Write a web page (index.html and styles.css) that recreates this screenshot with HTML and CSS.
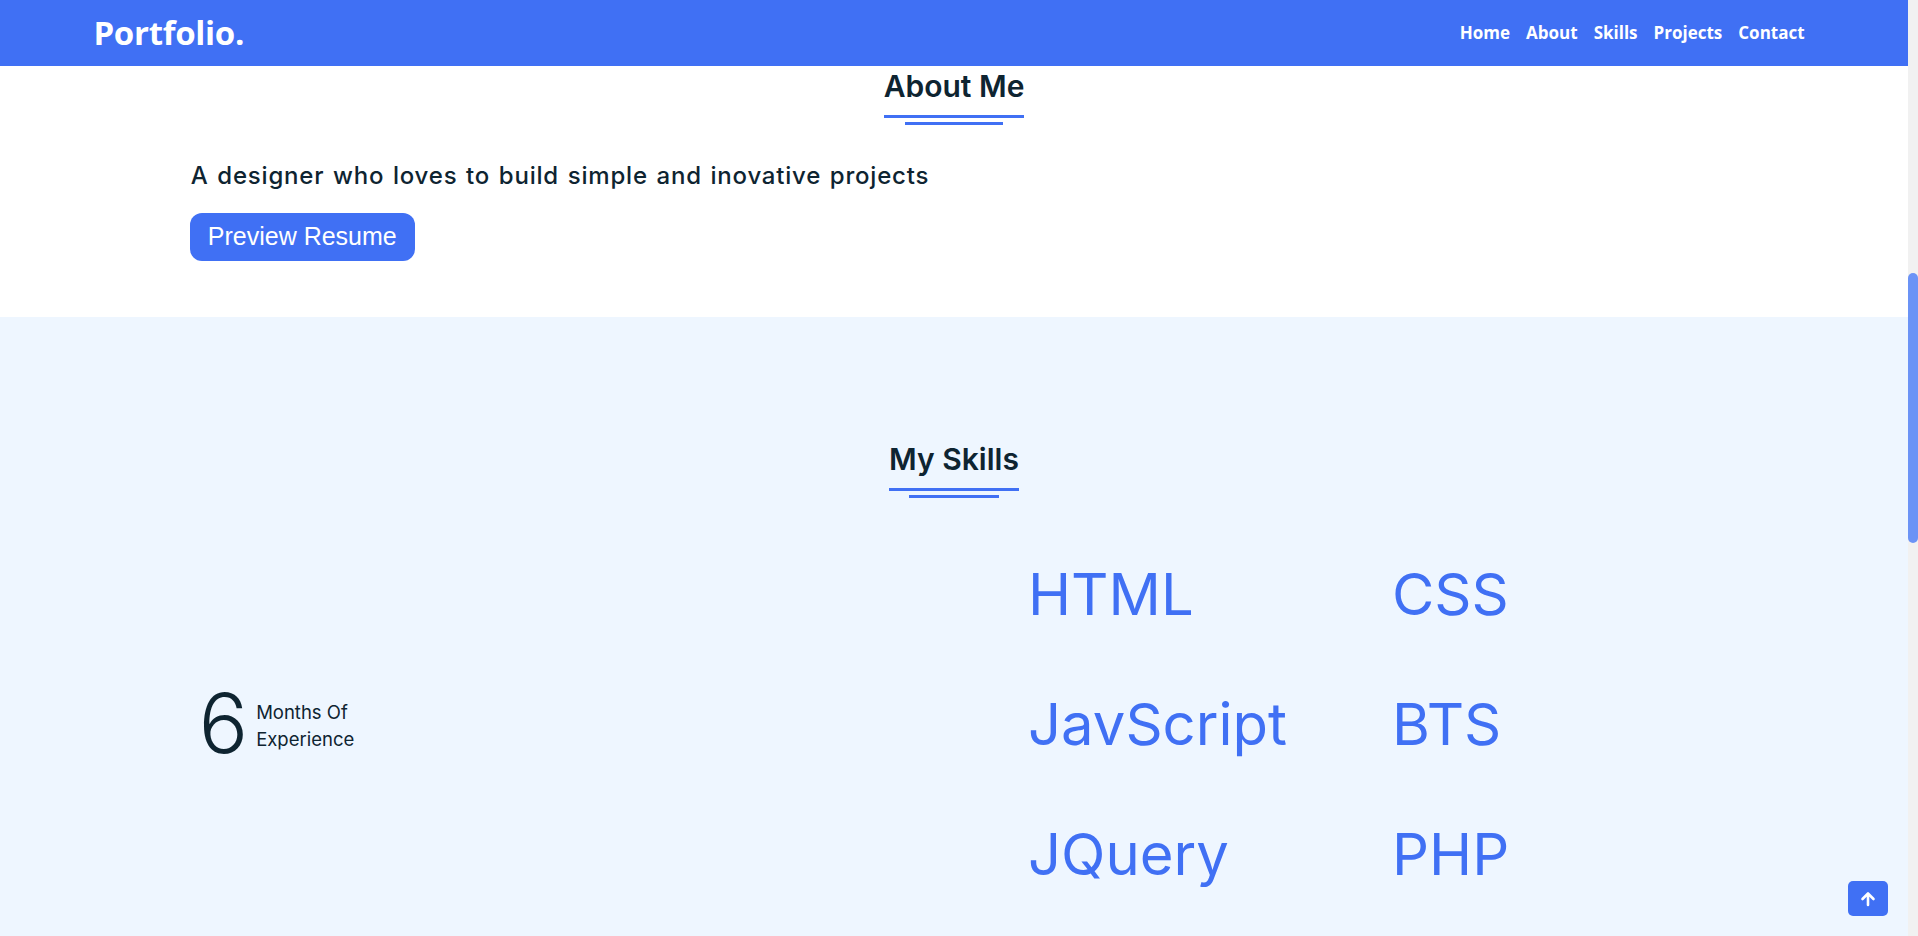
FILE: index.html
```html
<!DOCTYPE html>
<html lang="en">
<head>
<meta charset="utf-8">
<title>Portfolio</title>
<link rel="stylesheet" href="styles.css">
</head>
<body>
<div class="page">
  <header class="navbar">
    <div class="nav-inner">
      <a class="logo" href="#">Portfolio.</a>
      <nav class="nav-links">
        <a href="#">Home</a>
        <a href="#">About</a>
        <a href="#">Skills</a>
        <a href="#">Projects</a>
        <a href="#">Contact</a>
      </nav>
    </div>
  </header>

  <section class="about">
    <div class="title-wrap">
      <div class="title"><h2>About Me</h2></div>
    </div>
    <div class="about-content">
      <p class="about-text">A designer who loves to build simple and inovative projects</p>
      <button class="resume-btn">Preview Resume</button>
    </div>
  </section>

  <section class="skills">
    <div class="title-wrap">
      <div class="title"><h2>My Skills</h2></div>
    </div>
    <div class="skills-body">
      <div class="stat">
        <span class="stat-num">6</span>
        <span class="stat-label">Months Of<br>Experience</span>
      </div>
      <div class="skills-grid">
        <div class="skill">HTML</div>
        <div class="skill">CSS</div>
        <div class="skill">JavScript</div>
        <div class="skill">BTS</div>
        <div class="skill">JQuery</div>
        <div class="skill">PHP</div>
      </div>
    </div>
  </section>

  <a class="to-top" href="#" aria-label="Back to top">
    <svg width="16" height="16" viewBox="0 0 16 16" fill="none" stroke="#fff" stroke-width="2.6" stroke-linecap="round" stroke-linejoin="round"><path d="M8 14V2.5M2.5 8L8 2.5L13.5 8"/></svg>
  </a>
</div>
<aside class="scrollbar"><div class="thumb"></div></aside>
</body>
</html>
```

FILE: styles.css
```css
html, body {
  margin: 0;
  height: 100%;
  overflow: hidden;
}
body {
  display: flex;
  font-family: Inter, "Noto Sans", sans-serif;
  color: #0e2431;
  background: #fff;
}
.page {
  flex: 1;
  min-width: 0;
  height: 100vh;
  overflow: hidden;
  display: flex;
  flex-direction: column;
}
.scrollbar {
  width: 10px;
  flex-shrink: 0;
  background: #f1f1f1;
}
.thumb {
  margin-top: 273px;
  height: 270px;
  border-radius: 5px;
  background: #6b93f6;
}

/* navbar */
.navbar {
  height: 66px;
  flex-shrink: 0;
  background: #4070f4;
}
.nav-inner {
  width: 90%;
  height: 100%;
  margin: 0 auto;
  display: flex;
  align-items: center;
  justify-content: space-between;
}
.logo {
  font-family: "Open Sans", sans-serif;
  font-weight: 700;
  font-size: 33px;
  color: #fff;
  text-decoration: none;
  letter-spacing: -0.3px;
  margin-top: -2px;
  margin-left: -2px;
}
.nav-links {
  display: flex;
  gap: 16px;
  padding-right: 8px;
  margin-top: -2px;
}
.nav-links a {
  font-family: "Open Sans", sans-serif;
  font-weight: 700;
  font-size: 17px;
  color: #fff;
  text-decoration: none;
}

/* titles */
.title-wrap {
  display: flex;
  justify-content: center;
}
.title {
  display: inline-flex;
  flex-direction: column;
  align-items: center;
}
.title h2 {
  margin: 0;
  font-weight: 600;
  font-size: 30px;
  line-height: 36px;
  padding-bottom: 11px;
  border-bottom: 3px solid #4070f4;
  color: #0e2431;
}
.title::after {
  content: "";
  width: 70%;
  height: 3px;
  margin-top: 4px;
  background: #4070f4;
}

/* about */
.about {
  background: #fff;
  padding: 2px 0 56px;
}
.about-content {
  width: 80%;
  margin: 34px auto 0;
}
.about-text {
  margin: 0;
  font-weight: 500;
  font-size: 24px;
  line-height: 34.5px;
  letter-spacing: 0.8px;
  word-spacing: 1.5px;
  color: #0e2431;
}
.resume-btn {
  margin-top: 19px;
  height: 48px;
  padding: 0 18px;
  border: none;
  border-radius: 12px;
  background: #4070f4;
  color: #fff;
  font-family: "Liberation Sans", Arial, sans-serif;
  font-size: 25px;
  margin-left: -1px;
}

/* skills */
.skills {
  flex: 1;
  background: #eef6ff;
  padding-top: 124px;
}
.skills-body {
  width: 80%;
  margin: 31px auto 0;
  display: grid;
  grid-template-columns: minmax(0, 1fr) minmax(0, 1fr);
  align-items: center;
}
.stat {
  display: flex;
  align-items: center;
  gap: 8px;
  padding-left: 8px;
}
.stat-num {
  font-weight: 300;
  font-size: 82px;
  line-height: 1;
  color: #0e2431;
}
.stat-label {
  font-size: 18.5px;
  line-height: 27px;
  color: #0e2431;
  margin-top: 4px;
}
.skills-grid {
  display: grid;
  grid-template-columns: 364px 364px;
  padding-left: 74px;
}
.skill {
  font-weight: 400;
  font-size: 58px;
  line-height: 130px;
  color: #4070f4;
  white-space: nowrap;
}

/* back to top */
.to-top {
  position: fixed;
  right: 30px;
  bottom: 20px;
  width: 40px;
  height: 35px;
  border-radius: 5px;
  background: #4070f4;
  display: flex;
  align-items: center;
  justify-content: center;
}
```
